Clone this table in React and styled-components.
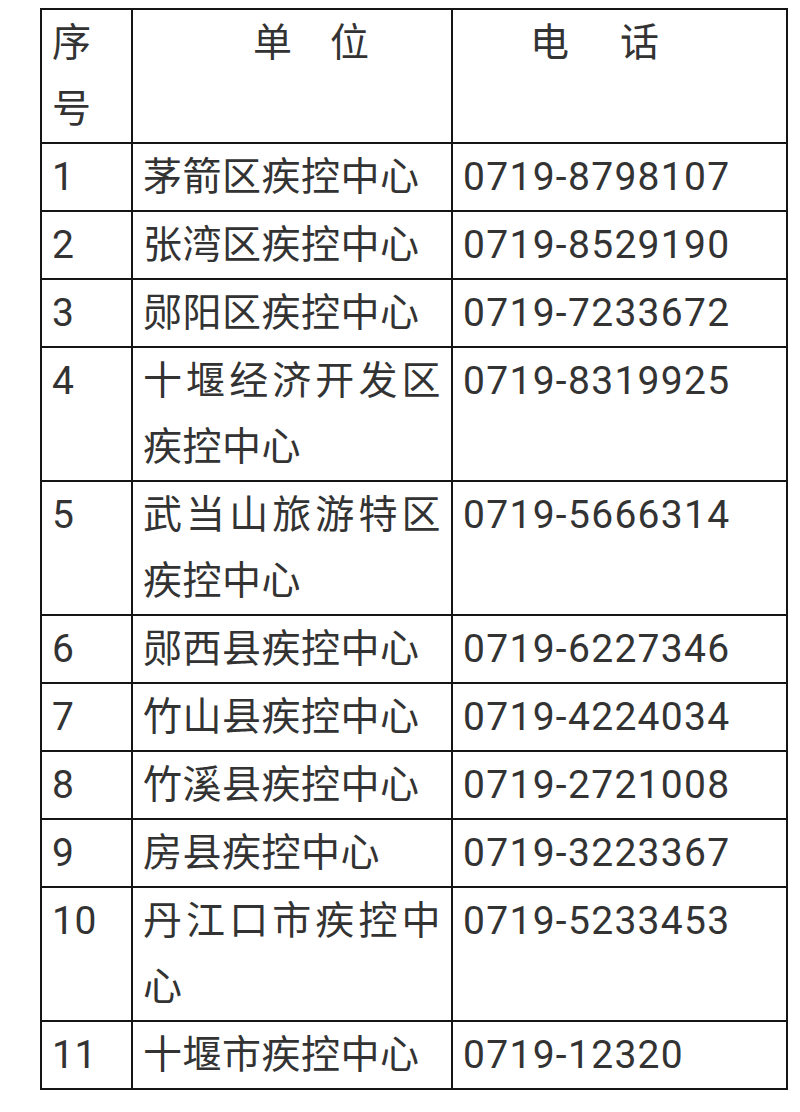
import styled, { createGlobalStyle } from "styled-components";

const GlobalStyle = createGlobalStyle`
  html, body {
    margin: 0;
    padding: 0;
    background: #ffffff;
  }
  body {
    font-family: Roboto, "Noto Sans CJK SC", sans-serif;
    color: #333333;
  }
`;

const Page = styled.div`
  padding: 8px 0 0 40px;
  width: 800px;
  height: 1112px;
  box-sizing: border-box;
`;

const Table = styled.table`
  border-collapse: collapse;
  table-layout: fixed;
  width: 746px;
  font-size: 39px;
  line-height: 66px;
  letter-spacing: 0.5px;
`;

const Cell = styled.td`
  border: 2px solid #151515;
  padding: 0 10px;
  vertical-align: top;
  text-align: justify;
  word-break: break-all;
  letter-spacing: ${(p) => (p.$phone ? "1.3px" : "inherit")};
`;

const HeaderLabel = styled.span`
  display: inline-block;
  padding-left: ${(p) => p.$indent}px;
  letter-spacing: ${(p) => p.$gap}px;
  white-space: nowrap;
`;

const rows = [
  ["1", "茅箭区疾控中心", "0719-8798107"],
  ["2", "张湾区疾控中心", "0719-8529190"],
  ["3", "郧阳区疾控中心", "0719-7233672"],
  ["4", "十堰经济开发区疾控中心", "0719-8319925"],
  ["5", "武当山旅游特区疾控中心", "0719-5666314"],
  ["6", "郧西县疾控中心", "0719-6227346"],
  ["7", "竹山县疾控中心", "0719-4224034"],
  ["8", "竹溪县疾控中心", "0719-2721008"],
  ["9", "房县疾控中心", "0719-3223367"],
  ["10", "丹江口市疾控中心", "0719-5233453"],
  ["11", "十堰市疾控中心", "0719-12320"],
];

export default function App() {
  return (
    <>
      <GlobalStyle />
      <Page>
        <Table>
          <colgroup>
            <col style={{ width: 91 }} />
            <col style={{ width: 320 }} />
            <col style={{ width: 335 }} />
          </colgroup>
          <tbody>
            <tr>
              <Cell>序号</Cell>
              <Cell>
                <HeaderLabel $indent={110} $gap={38}>单位</HeaderLabel>
              </Cell>
              <Cell>
                <HeaderLabel $indent={67} $gap={51}>电话</HeaderLabel>
              </Cell>
            </tr>
            {rows.map(([no, unit, phone]) => (
              <tr key={no}>
                <Cell>{no}</Cell>
                <Cell>{unit}</Cell>
                <Cell $phone>{phone}</Cell>
              </tr>
            ))}
          </tbody>
        </Table>
      </Page>
    </>
  );
}
